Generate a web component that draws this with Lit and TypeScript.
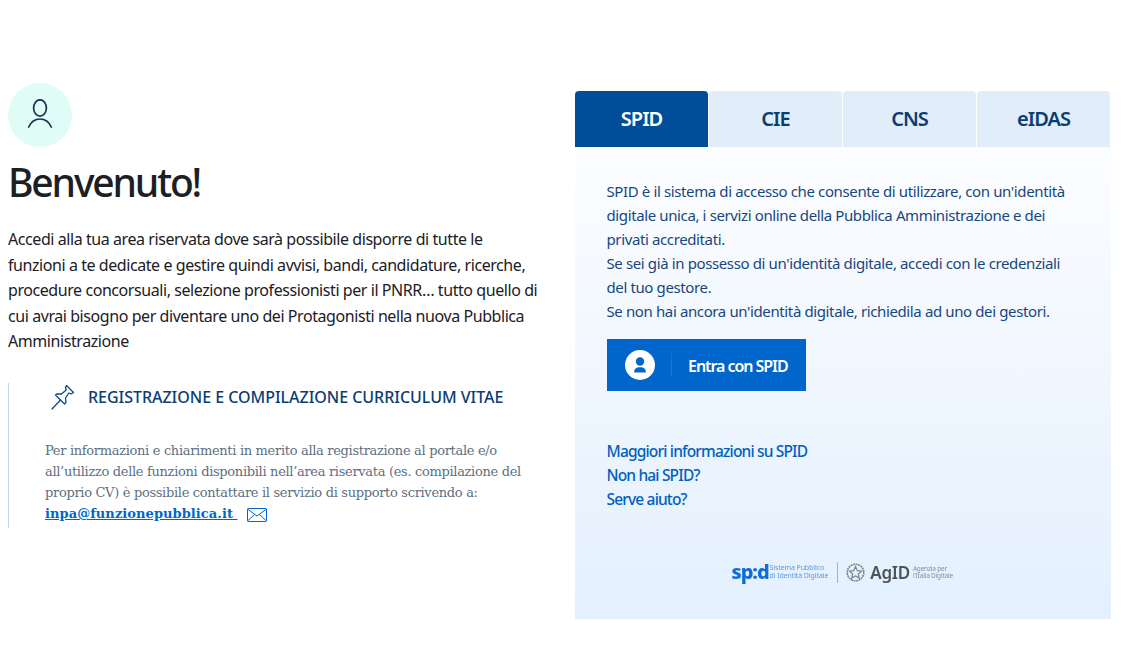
import { LitElement, html, css } from "lit";
import { customElement } from "lit/decorators.js";

@customElement("app-root")
export class AppRoot extends LitElement {
  static styles = css`
    :host { display: block; width: 1125px; height: 669px; background: #fff; font-family: "Noto Sans", sans-serif; overflow: hidden; }
    .page { display: flex; align-items: flex-start; padding: 83px 15px 0 8px; gap: 35px; }
    .left { width: 532px; flex: none; }
    .avatar { width: 64px; height: 64px; border-radius: 50%; background: #dffdf6; display: flex; align-items: center; justify-content: center; }
    h1 { margin: 11px 0 0; font-size: 39px; line-height: 47px; font-weight: 500; color: #1c2024; letter-spacing: -2.15px; }
    .intro { margin: 22px 0 0; font-size: 16px; line-height: 25.5px; color: #1c2024; letter-spacing: -0.43px; white-space: nowrap; }
    .box { margin-top: 28px; border-left: 1px solid #c5d8ea; padding: 0 0 0 36px; height: 145px; }
    .box-head { display: flex; align-items: center; gap: 13px; margin-left: 6px; height: 28px; }
    .box-title { font-size: 16px; font-weight: 500; color: #0a3d73; letter-spacing: -0.03px; white-space: nowrap; }
    .box-text { margin: 29px 0 0; font-family: "DejaVu Serif", serif; font-size: 13px; line-height: 21.3px; color: #5c6f82; width: 490px; letter-spacing: -0.32px; white-space: nowrap; }
    .mail { display: inline-flex; align-items: center; gap: 9px; font-weight: 700; color: #0066cc; }
    .mail a { color: #0066cc; text-decoration: underline; letter-spacing: 0.06px; }
    .mail svg { margin-top: 2px; }
    .right { width: 535px; flex: none; padding-top: 8px; }
    .tabs { display: flex; gap: 1px; }
    .tab { width: 133px; height: 54px; padding-bottom: 2px; background: #e1edf9; color: #0a3d73; border-radius: 4px 4px 0 0; display: flex; align-items: center; justify-content: center; font-size: 20px; font-weight: 600; letter-spacing: -1px; }
    .tab.active { background: #004d99; color: #fff; }
    .panel { width: 536px; height: 472px; box-sizing: border-box; padding: 32px 32px 0 31.5px; background: linear-gradient(180deg, #fcfdff 0%, #e3f0fe 100%); color: #0a4a8a; }
    .desc { margin: 0; font-size: 15px; line-height: 24px; letter-spacing: -0.38px; white-space: nowrap; color: #17477e; }
    .btn { margin: 16px 0 0 0.5px; width: 199px; height: 52px; background: #0066cc; display: flex; align-items: center; color: #fff; }
    .btn .ico { width: 30px; height: 30px; margin-left: 18px; flex: none; }
    .btn .sep { width: 1px; height: 24px; background: #1a75d1; margin-left: 16px; flex: none; }
    .btn .lbl { margin-left: 16px; padding-top: 2px; font-size: 16px; font-weight: 600; letter-spacing: -1.05px; white-space: nowrap; }
    .links { margin-top: 48px; display: flex; flex-direction: column; }
    .links a { font-size: 15.5px; line-height: 24px; font-weight: 500; color: #0060c0; letter-spacing: -0.83px; }
    .logos { margin-top: 49px; display: flex; align-items: center; justify-content: center; margin-left: -1px; height: 24px; filter: blur(0.45px); }
    .spid { font-size: 20px; font-weight: 800; color: #0f6fd4; letter-spacing: -1.1px; line-height: 20px; }
    .tiny { font-size: 7px; line-height: 8px; white-space: nowrap; letter-spacing: -0.1px; }
    .t1 { color: #5b9ae0; margin-left: 1px; }
    .t2 { color: #8a8f96; margin-left: 3px; font-size: 6.5px; line-height: 7.5px; letter-spacing: -0.2px; }
    .vr { width: 1px; height: 21px; background: #a9b0b7; margin: 0 8px 0 9px; }
    .agid { font-size: 17px; font-weight: 600; color: #4d5359; margin-left: 5px; letter-spacing: -0.3px; }
    .emblem { width: 19px; height: 21px; }
  `;

  render() {
    return html`
      <div class="page">
        <section class="left">
          <div class="avatar">
            <svg width="26" height="32" viewBox="0 0 26 32" fill="none" stroke="#17324d" stroke-width="1.7" stroke-linecap="round">
              <ellipse cx="13" cy="9" rx="6.4" ry="8.2" />
              <path d="M1.7 28 C4 23 8 20 13 20 C18 20 22 23 24.3 28" />
            </svg>
          </div>
          <h1>Benvenuto!</h1>
          <p class="intro">Accedi alla tua area riservata dove sarà possibile disporre di tutte le<br />funzioni a te dedicate e gestire quindi avvisi, bandi, candidature, ricerche,<br />procedure concorsuali, selezione professionisti per il PNRR… tutto quello di<br />cui avrai bisogno per diventare uno dei Protagonisti nella nuova Pubblica<br />Amministrazione</p>
          <div class="box">
            <div class="box-head">
              <svg width="24" height="26" viewBox="0 0 24 26" fill="none" stroke="#0a4a8a" stroke-width="1.3" stroke-linejoin="round" stroke-linecap="round">
                <path d="M1 25 L9 16.5" />
                <path d="M15.5 1.5 L22.5 8.5 L20.5 9.8 L17.8 9 L14.5 14 L15 18.5 L13.5 20 L4.5 11 L6 9.8 L10.5 10 L15.2 6 L14.5 3.5 Z" />
              </svg>
              <span class="box-title">REGISTRAZIONE E COMPILAZIONE CURRICULUM VITAE</span>
            </div>
            <p class="box-text">Per informazioni e chiarimenti in merito alla registrazione al portale e/o<br />all’utilizzo delle funzioni disponibili nell’area riservata (es. compilazione del<br />proprio CV) è possibile contattare il servizio di supporto scrivendo a:<br />
              <span class="mail"><a>inpa@funzionepubblica.it&nbsp;</a>
                <svg width="20" height="14" viewBox="0 0 20 14" fill="none" stroke="#0066cc" stroke-width="1">
                  <rect x="0.5" y="0.5" width="19" height="13" rx="1" />
                  <path d="M0.5 1 L10 8 L19.5 1 M0.5 13 L7.5 6.5 M19.5 13 L12.5 6.5" />
                </svg>
              </span>
            </p>
          </div>
        </section>
        <section class="right">
          <div class="tabs">
            <div class="tab active">SPID</div>
            <div class="tab">CIE</div>
            <div class="tab">CNS</div>
            <div class="tab">eIDAS</div>
          </div>
          <div class="panel">
            <p class="desc">SPID è il sistema di accesso che consente di utilizzare, con un'identità<br />digitale unica, i servizi online della Pubblica Amministrazione e dei<br />privati accreditati.<br />Se sei già in possesso di un'identità digitale, accedi con le credenziali<br />del tuo gestore.<br />Se non hai ancora un'identità digitale, richiedila ad uno dei gestori.</p>
            <div class="btn">
              <svg class="ico" viewBox="0 0 30 30">
                <circle cx="15" cy="15" r="15" fill="#fff" />
                <circle cx="15" cy="11.5" r="4.2" fill="#0066cc" />
                <path d="M9 22.5 C9.3 18.5 11.5 17.2 15 17.2 C18.5 17.2 20.7 18.5 21 22.5 Z" fill="#0066cc" />
              </svg>
              <span class="sep"></span>
              <span class="lbl">Entra con SPID</span>
            </div>
            <div class="links">
              <a>Maggiori informazioni su SPID</a>
              <a>Non hai SPID?</a>
              <a>Serve aiuto?</a>
            </div>
            <div class="logos">
              <span class="spid">sp:d</span>
              <span class="tiny t1">Sistema Pubblico<br />di Identità Digitale</span>
              <span class="vr"></span>
              <svg class="emblem" viewBox="0 0 19 21" fill="none" stroke="#7d858c">
                <circle cx="9.5" cy="10.5" r="8.3" stroke-width="1.6" stroke-dasharray="2 0.6" />
                <path d="M9.5 4.5 L11.3 8.7 L15.5 9.2 L12.3 12 L13.2 16 L9.5 13.9 L5.8 16 L6.7 12 L3.5 9.2 L7.7 8.7 Z" stroke-width="1.2" />
              </svg>
              <span class="agid">AgID</span>
              <span class="tiny t2">Agenzia per<br />l'Italia Digitale</span>
            </div>
          </div>
        </section>
      </div>
    `;
  }
}
